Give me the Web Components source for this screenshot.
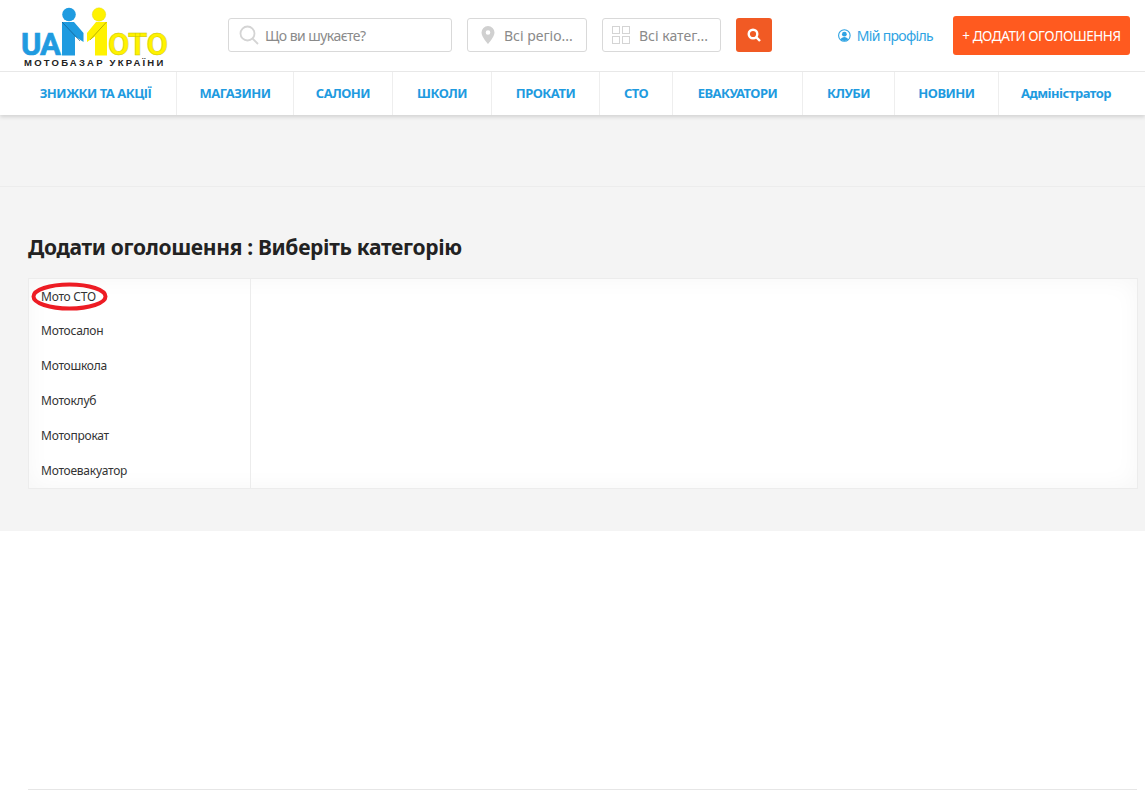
<!DOCTYPE html>
<html><head><meta charset="utf-8">
<style>
html,body{margin:0;padding:0;background:#fff;font-family:"Noto Sans","Open Sans",sans-serif;}
</style></head><body>
<ua-page></ua-page>
<script>
function def(name,html){
  customElements.define(name,class extends HTMLElement{
    constructor(){super();const r=this.attachShadow({mode:'open'});r.innerHTML=html;}
  });
}
def('ua-logo',`<style>:host{display:block;width:150px;height:61px;font-family:Roboto,"Liberation Sans",sans-serif}
.row{display:flex;align-items:flex-end;height:51px}
svg{display:block;flex:none}
.w{display:block;flex:none;font-weight:700;font-size:31px;line-height:22px;white-space:nowrap}
.ua{width:40px;box-sizing:border-box;color:#1f9be0;-webkit-text-stroke:.7px #1f9be0;letter-spacing:-1px}
.oto{color:#fff200;-webkit-text-stroke:.5px #c9c300;letter-spacing:-.3px}
.tag{margin:2px 0 0 3px;font-family:"Liberation Sans",sans-serif;font-weight:700;font-size:9.500px;line-height:10px;letter-spacing:2.220px;color:#222;white-space:nowrap}
</style>
<div class="row"><span class="w ua">UA</span>
<svg width="47" height="51" viewBox="61 5 47 51">
<circle cx="69" cy="14.500" r="6.800" fill="#1f9be0"/>
<path d="M62 22H74L83.500 33V42L75 36.500V55.500H62Z" fill="#1f9be0"/>
<path d="M62 22L80 41" stroke="#0d4f7a" stroke-width=".6" fill="none"/>
<circle cx="99" cy="14.500" r="6.800" fill="#fff200" stroke="#cfc800" stroke-width=".3"/>
<path d="M107 22H96L87 33V42L95 36.500V55.500H107Z" fill="#fff200"/>
<path d="M106.500 22L90 40" stroke="#8a8500" stroke-width=".6" fill="none"/>
</svg><span class="w oto">ОТО</span></div>
<div class="tag">МОТОБАЗАР УКРАЇНИ</div>`);
def('ua-field',`<style>:host{display:flex;align-items:center;box-sizing:border-box;height:34px;border:1px solid #d9d9d9;border-radius:3px;background:#fff;color:#8a8a8a;font-size:14px;white-space:nowrap;overflow:hidden}
::slotted(svg){flex:none}</style><slot name="i"></slot><slot></slot>`);
def('ua-nav-item',`<style>:host{display:flex;align-items:center;justify-content:center;box-sizing:border-box;height:100%;padding-bottom:2px;border-right:1px solid #eee;color:#1f9be0;font-weight:700;font-size:13px;letter-spacing:-.5px;white-space:nowrap}:host(:last-child){border-right:0}</style><slot></slot>`);
def('ua-header',`<style>
:host{display:block;background:#fff;position:relative;box-shadow:0 2px 4px rgba(0,0,0,.14)}
.top{display:flex;align-items:flex-start;height:72px;box-sizing:border-box;border-bottom:1px solid #e8e8e8}
ua-logo{margin:5px 0 0 21px}
ua-field{margin-top:18px}
.btn{margin:18px 0 0 15px;width:36px;height:34px;background:#f15a24;border-radius:3px;display:flex;align-items:center;justify-content:center}
.prof{margin:18px 0 0 66px;width:95px;height:34px;display:flex;align-items:center;gap:6px;color:#2ea3e3;font-size:14px;letter-spacing:-.68px;white-space:nowrap}
.add{margin:16px 0 0 20px;width:177px;height:39px;background:#ff5a1f;border-radius:3px;color:#fff;font-size:13.500px;letter-spacing:-.45px;display:flex;align-items:center;justify-content:center;white-space:nowrap}
nav{display:flex;height:43px}
</style>
<div class="top">
<ua-logo></ua-logo>
<ua-field style="margin-left:57px;width:224px;padding-left:10px;gap:6px;letter-spacing:-.55px">
<svg slot="i" width="20" height="20" viewBox="0 0 20 20" fill="none" stroke="#d4d4d4" stroke-width="1.800"><circle cx="8.500" cy="8.500" r="7"/><path d="M13.500 13.500L19 19"/></svg>Що ви шукаєте?</ua-field>
<ua-field style="margin-left:15px;width:120px;padding-left:13px;gap:9px">
<svg slot="i" width="14" height="18" viewBox="0 0 14 18"><path fill-rule="evenodd" fill="#d0d0d0" d="M7 0a6.500 6.500 0 0 1 6.500 6.500C13.500 11 7 18 7 18S.5 11 .5 6.500A6.500 6.500 0 0 1 7 0Zm0 4.200a2.300 2.300 0 1 0 0 4.600a2.300 2.300 0 0 0 0-4.600Z"/></svg>Всі регіо...</ua-field>
<ua-field style="margin-left:15px;width:119px;padding-left:9px;gap:9px">
<svg slot="i" width="18" height="18" viewBox="0 0 18 18" fill="none" stroke="#d4d4d4"><rect x=".5" y=".5" width="7" height="7"/><rect x="10.500" y=".5" width="7" height="7"/><rect x=".5" y="10.500" width="7" height="7"/><rect x="10.500" y="10.500" width="7" height="7"/></svg>Всі катег...</ua-field>
<div class="btn"><svg width="14" height="14" viewBox="0 0 14 14" fill="none" stroke="#fff" stroke-width="2.400"><circle cx="6" cy="6" r="4.300"/><path d="M9.200 9.200L13 13"/></svg></div>
<div class="prof"><svg width="15" height="15" viewBox="0 0 15 15"><circle cx="7.500" cy="7.500" r="6.800" fill="none" stroke="#2ea3e3" stroke-width="1.300"/><circle cx="7.500" cy="6" r="2.800" fill="#2ea3e3"/><path d="M2.800 12a5.500 5.500 0 0 1 9.400 0a6.500 6.500 0 0 1-9.400 0Z" fill="#2ea3e3"/></svg>Мій профіль</div>
<div class="add">+ ДОДАТИ ОГОЛОШЕННЯ</div>
</div>
<nav>
<ua-nav-item style="width:177px;padding-left:15px">ЗНИЖКИ ТА АКЦІЇ</ua-nav-item>
<ua-nav-item style="width:117px">МАГАЗИНИ</ua-nav-item>
<ua-nav-item style="width:99px">САЛОНИ</ua-nav-item>
<ua-nav-item style="width:99px">ШКОЛИ</ua-nav-item>
<ua-nav-item style="width:108px">ПРОКАТИ</ua-nav-item>
<ua-nav-item style="width:73px">СТО</ua-nav-item>
<ua-nav-item style="width:130px">ЕВАКУАТОРИ</ua-nav-item>
<ua-nav-item style="width:92px">КЛУБИ</ua-nav-item>
<ua-nav-item style="width:104px">НОВИНИ</ua-nav-item>
<ua-nav-item style="width:146px;padding-right:12px">Адміністратор</ua-nav-item>
</nav>`);
def('ua-cat',`<style>:host{display:flex;align-items:center;height:35px;padding-left:12px;color:#333;font-size:12px;letter-spacing:-.25px;white-space:nowrap;position:relative}</style><slot></slot>`);
def('ua-picker',`<style>
:host{display:grid;grid-template-columns:222px 1fr;height:211px;box-sizing:border-box;border:1px solid #ececec;background:#fff;box-shadow:inset 0 0 24px rgba(0,0,0,.04)}
.l{border-right:1px solid #ececec;display:flex;flex-direction:column}
.ring{position:absolute;left:2px;top:3px;width:77px;height:29px}
</style>
<div class="l">
<ua-cat style="height:34px;">Мото СТО<svg class="ring" viewBox="0 0 77 29"><ellipse cx="38.500" cy="14.500" rx="36" ry="12" fill="none" stroke="#ed1c24" stroke-width="4"/></svg></ua-cat>
<ua-cat>Мотосалон</ua-cat><ua-cat>Мотошкола</ua-cat><ua-cat>Мотоклуб</ua-cat><ua-cat>Мотопрокат</ua-cat><ua-cat>Мотоевакуатор</ua-cat>
</div><div></div>`);
def('ua-page',`<style>
:host{display:block;height:790px;overflow:hidden;color:#222}
.band{height:71px;background:#f4f4f4;border-bottom:1px solid #ececec}
main{background:#f4f4f4;height:344px;box-sizing:border-box;padding:46px 7px 0 28px}
h1{margin:0 0 16px;font-size:21px;line-height:29px;font-weight:700;color:#222;letter-spacing:-.32px}
.rest{height:258px;box-sizing:border-box;padding:0 8px 0 28px}
.rule{margin-top:258px;border-top:1px solid #e6e6e6}
</style>
<ua-header></ua-header><div class="band"></div>
<main><h1>Додати оголошення : Виберіть категорію</h1><ua-picker></ua-picker></main>
<div class="rest"><div class="rule"></div></div>`);
</script>
</body></html>
